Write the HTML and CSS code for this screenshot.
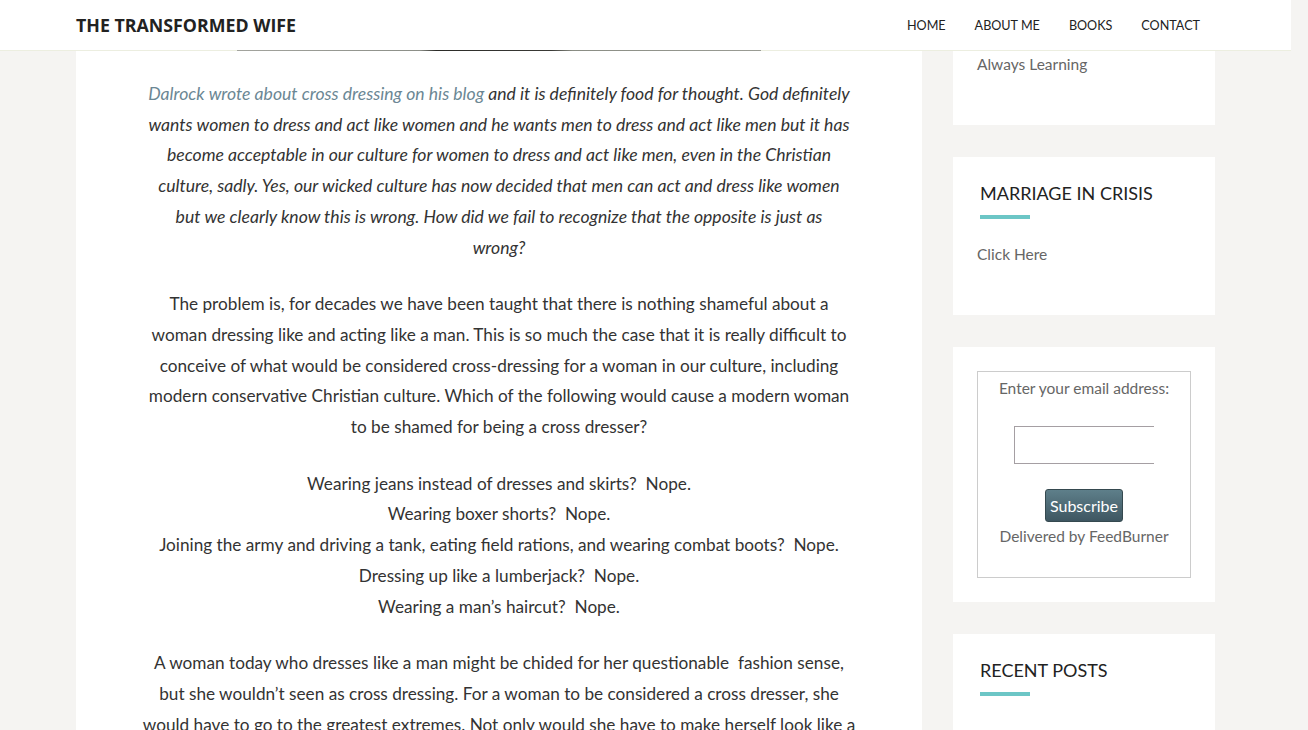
FILE: index.html
```html
<!DOCTYPE html>
<html lang="en">
<head>
<meta charset="utf-8">
<title>The Transformed Wife</title>
<link rel="stylesheet" href="styles.css">
</head>
<body>
<div class="page">
  <header class="site-header">
    <div class="wrap header-inner">
      <div class="site-title">THE TRANSFORMED WIFE</div>
      <nav class="nav">
        <a href="#">HOME</a>
        <a href="#">ABOUT ME</a>
        <a href="#">BOOKS</a>
        <a href="#">CONTACT</a>
      </nav>
    </div>
  </header>
  <div class="wrap site-inner">
    <main class="content">
      <div class="entry-image"></div>
      <div class="entry">
        <p class="quote"><a href="#">Dalrock wrote about cross dressing on his blog</a> and it is definitely food for thought. God definitely<br>wants women to dress and act like women and he wants men to dress and act like men but it has<br>become acceptable in our culture for women to dress and act like men, even in the Christian<br>culture, sadly. Yes, our wicked culture has now decided that men can act and dress like women<br>but we clearly know this is wrong. How did we fail to recognize that the opposite is just as<br>wrong?</p>
        <p>The problem is, for decades we have been taught that there is nothing shameful about a<br>woman dressing like and acting like a man. This is so much the case that it is really difficult to<br>conceive of what would be considered cross-dressing for a woman in our culture, including<br>modern conservative Christian culture. Which of the following would cause a modern woman<br>to be shamed for being a cross dresser?</p>
        <p>Wearing jeans instead of dresses and skirts?&nbsp; Nope.<br>Wearing boxer shorts?&nbsp; Nope.<br>Joining the army and driving a tank, eating field rations, and wearing combat boots?&nbsp; Nope.<br>Dressing up like a lumberjack?&nbsp; Nope.<br>Wearing a man’s haircut?&nbsp; Nope.</p>
        <p>A woman today who dresses like a man might be chided for her questionable&nbsp; fashion sense,<br>but she wouldn’t seen as cross dressing. For a woman to be considered a cross dresser, she<br>would have to go to the greatest extremes. Not only would she have to make herself look like a</p>
      </div>
    </main>
    <aside class="sidebar">
      <section class="widget widget-first">
        <p><a href="#">Always Learning</a></p>
      </section>
      <section class="widget">
        <h4 class="widget-title">MARRIAGE IN CRISIS</h4>
        <p><a href="#">Click Here</a></p>
      </section>
      <section class="widget">
        <form class="feedburner">
          <p class="fb-label">Enter your email address:</p>
          <p class="fb-field"><input type="text" class="fb-input"></p>
          <p class="fb-action"><button type="button" class="fb-button">Subscribe</button></p>
          <p class="fb-credit">Delivered by <a href="#">FeedBurner</a></p>
        </form>
      </section>
      <section class="widget">
        <h4 class="widget-title">RECENT POSTS</h4>
      </section>
    </aside>
  </div>
</div>
</body>
</html>
```

FILE: styles.css
```css
* { box-sizing: border-box; }
html, body { margin: 0; padding: 0; }
body {
  background: #f5f4f2;
  font-family: Lato, "Liberation Sans", sans-serif;
  color: #333;
  font-size: 17.2px;
  line-height: 30.7px;
  overflow: hidden;
  height: 730px;
}
a { text-decoration: none; color: inherit; }
.page { width: 1291px; }
.wrap { width: 1139px; margin: 0 auto; }

.site-header {
  background: #fff;
  height: 51px;
  border-bottom: 1px solid #eceee0;
}
.header-inner {
  display: flex;
  align-items: center;
  justify-content: space-between;
  height: 50px;
}
.site-title {
  font-family: "Open Sans", sans-serif;
  font-weight: 700;
  font-size: 17.8px;
  color: #222;
}
.nav {
  display: flex;
  gap: 29px;
  padding-right: 15px;
  padding-top: 2px;
  font-size: 12.6px;
  color: #222;
}

.site-inner {
  display: flex;
  align-items: flex-start;
  gap: 31px;
}
.content {
  width: 846px;
  background: #fff;
  min-height: 700px;
}
.entry-image {
  position: relative;
  margin: -1px auto 0;
  width: 524px;
  height: 1px;
  background: linear-gradient(to right, #a3a49e 0%, #8c8f88 35%, #2b2b28 38%, #3a3a36 60%, #8a8d84 64%, #9a9c94 100%);
}
.entry {
  padding: 28px 40px 0;
  text-align: center;
}
.entry p {
  margin: 0 0 26px;
  white-space: nowrap;
}
.quote { font-style: italic; font-size: 17.6px; }
.quote a { color: #6b8794; }

.sidebar { width: 262px; }
.widget {
  background: #fff;
  padding: 24px;
  margin-bottom: 32px;
  font-size: 15.5px;
  line-height: 26px;
  color: #666;
}
.widget-first { padding-top: 0; }
.widget p { margin: 0 0 24px; }
.widget-title {
  font-family: Lato, sans-serif;
  font-weight: 400;
  font-size: 18px;
  line-height: 24px;
  color: #222;
  margin: 0 0 22px 3px;
  position: relative;
  padding-bottom: 14px;
}
.widget-title::after {
  content: "";
  position: absolute;
  left: 0;
  bottom: 0;
  width: 50px;
  height: 4px;
  background: #6cc6c6;
}

.feedburner {
  border: 1px solid #ccc;
  padding: 3px 0 0;
  height: 207px;
  text-align: center;
  margin: 0;
}
.feedburner p { margin: 0; }
.fb-field { padding-top: 25px; }
.fb-input {
  display: inline-block;
  width: 140px;
  height: 38px;
  border: 1px solid #a59fa3;
  border-right: none;
  background: #fff;
  vertical-align: top;
}
.fb-action { padding-top: 25px; line-height: 0; }
.fb-button {
  font-family: Lato, sans-serif;
  font-size: 16px;
  line-height: 31px;
  height: 33px;
  width: 78px;
  padding: 0;
  color: #fff;
  background: linear-gradient(#5e7f8a, #3e5661);
  border: 1px solid #35494f;
  border-radius: 3px;
}
.fb-credit { padding-top: 1px; }
```
